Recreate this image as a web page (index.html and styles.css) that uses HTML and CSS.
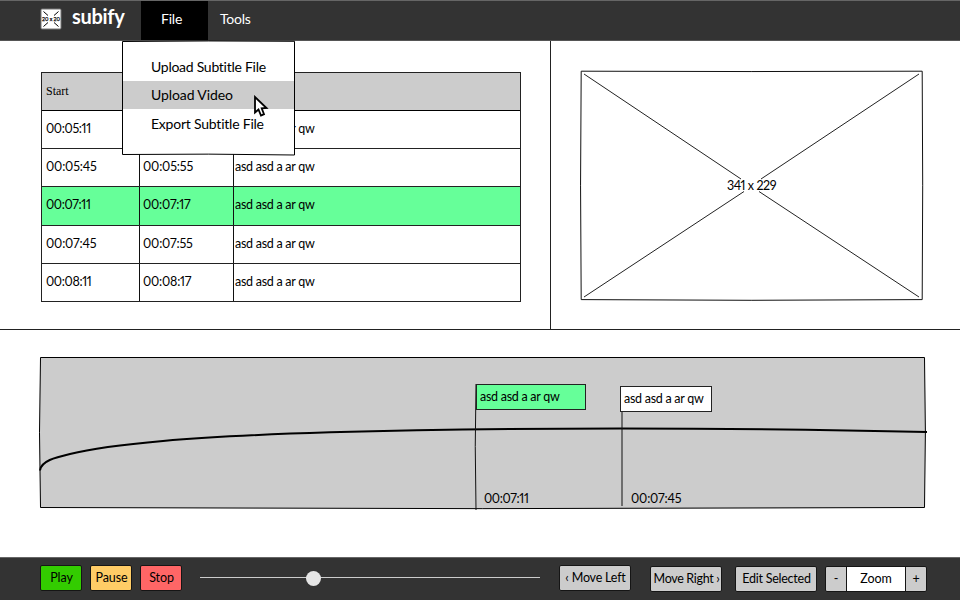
FILE: index.html
```html
<!DOCTYPE html>
<html lang="en">
<head>
<meta charset="utf-8">
<title>subify</title>
<link rel="stylesheet" href="styles.css">
</head>
<body>
<div class="app">
  <header class="topbar">
    <svg class="logo" width="22" height="22" viewBox="0 0 22 22">
      <rect x="1" y="1" width="20" height="20" rx="1" fill="#fff" stroke="#777"/>
      <path d="M3.500 3.500l4.500 4M18.500 3.500l-4.500 4M3.500 18.500l4.500-4M18.500 18.500l-4.500-4" stroke="#000" stroke-width="1"/>
      <text x="2" y="13" font-size="6" textLength="18" lengthAdjust="spacingAndGlyphs" stroke="#000" stroke-width=".25">20 x 20</text>
    </svg>
    <h1 class="brand">subify</h1>
    <nav class="menu">
      <div class="tab tab-open">
        <span class="tab-label">File</span>
        <div class="dropdown">
          <svg class="frame" width="174" height="116" viewBox="0 0 174 116">
            <path d="M.5 1.500Q87 .5 172.500 1.300V115Q87 113.500 .5 114.500Z" fill="#fff" stroke="#000"/>
          </svg>
          <span class="item sub">Upload Subtitle File</span>
          <span class="item item-on vid">Upload Video</span>
          <span class="item exp">Export Subtitle File</span>
          <svg class="cursor" width="18" height="24" viewBox="0 0 18 24">
            <path d="M2 2V17.500L5.500 14.500L8 20.500L11 19.200L8.700 13.300L13.500 13Z" fill="#fff" stroke="#000" stroke-width="1.800"/>
          </svg>
        </div>
      </div>
      <span class="tools">Tools</span>
    </nav>
  </header>

  <main class="workspace">
    <section class="subtitles">
      <div class="table">
        <div class="thead">Start</div>
        <div class="row"><span class="t t11">00:05:11</span><span class="t"></span><span class="txt">asd asd a ar qw</span></div>
        <div class="row"><span class="t">00:05:45</span><span class="t">00:05:55</span><span class="txt">asd asd a ar qw</span></div>
        <div class="row selected"><span class="t t11">00:07:11</span><span class="t t17">00:07:17</span><span class="txt">asd asd a ar qw</span></div>
        <div class="row"><span class="t">00:07:45</span><span class="t">00:07:55</span><span class="txt">asd asd a ar qw</span></div>
        <div class="row"><span class="t t11">00:08:11</span><span class="t t17">00:08:17</span><span class="txt">asd asd a ar qw</span></div>
      </div>
    </section>
    <section class="preview">
      <div class="video">
        <svg class="frame" width="344" height="231" viewBox="0 0 344 231">
          <path d="M1.200 1.200Q172 1.900 342.200 1.200Q343.200 115 342.200 229.600Q172 231 1.200 229.600Q-.1 115 1.200 1.200Z" fill="none" stroke="#111"/>
          <path d="M4 4L161 109M339 4L181 109M4 227L164 121.500M339 227L179 121.500" stroke="#222" fill="none"/>
        </svg>
        <span class="size">341 x 229</span>
      </div>
    </section>
  </main>

  <section class="timeline">
    <div class="track">
      <svg class="frame" width="890" height="154" viewBox="0 0 890 154">
        <path d="M1.500 1.500H885.500Q887.300 76 885.500 151.500Q443 153.800 1.500 151.500Q-.5 76 1.500 1.500Z" fill="#ccc" stroke="#000"/>
        <path d="M1 114.500C2 105 16 101.500 31 98C59 91 96 87.500 124 85C181 80 236 78 291 76.300C391 73.500 491 72.600 581 72.500C701 72.500 791 73.500 888 76" fill="none" stroke="#000" stroke-width="2"/>
        <path d="M437 28Q435.500 90 437 154M583 55V150" fill="none" stroke="#111"/>
      </svg>
      <div class="cue cue-a"><span class="txt">asd asd a ar qw</span></div>
      <div class="cue cue-b"><span class="txt">asd asd a ar qw</span></div>
      <span class="stamp stamp-a t11">00:07:11</span>
      <span class="stamp stamp-b">00:07:45</span>
    </div>
  </section>

  <footer class="controls">
    <button class="btn play">Play</button>
    <button class="btn pause">Pause</button>
    <button class="btn stop">Stop</button>
    <div class="slider"><div class="knob"></div></div>
    <button class="btn left">‹ Move Left</button>
    <button class="btn right low">Move Right ›</button>
    <button class="btn edit low">Edit Selected</button>
    <div class="zoom low"><span>-</span><span class="zoom-label">Zoom</span><span>+</span></div>
  </footer>
</div>
</body>
</html>
```
FILE: styles.css
```css
* { box-sizing: border-box; }
body { margin: 0; background: #fff; color: #000; font-family: Lato, sans-serif; font-size: 12.5px; font-variant-numeric: proportional-nums; }
span { white-space: nowrap; }
.app { width: 960px; height: 600px; display: flex; flex-direction: column; overflow: hidden; }
.frame { position: absolute; left: 0; top: 0; z-index: -1; }

.topbar { height: 41px; background: #333; border-top: 1px solid #666; border-bottom: 1px solid #555; display: flex; padding-left: 40px; color: #fff; position: relative; z-index: 2; }
.logo { margin-top: 7px; flex: none; overflow: visible; }
.brand { margin: 0 0 0 10px; width: 69px; font-size: 20px; line-height: 31px; font-weight: 700; letter-spacing: -.3px; }
.menu { display: flex; font-size: 14px; line-height: 36px; }
.tab { width: 67px; background: #000; position: relative; padding-left: 20px; letter-spacing: -.2px; }
.tools { padding-left: 12px; letter-spacing: -.25px; }
.dropdown { position: absolute; left: -19px; top: 38.500px; width: 174px; height: 116px; padding: 13.500px 2px 0 1px; display: flex; flex-direction: column; color: #000; z-index: 1; }
.item { height: 28px; line-height: 27px; padding-left: 28px; letter-spacing: -.27px; }
.vid { letter-spacing: -.1px; }
.item-on { background: #ccc; height: 28px; }
.exp { line-height: 30px; letter-spacing: -.22px; }
.cursor { position: absolute; left: 131px; top: 55px; }

.workspace { height: 289px; display: grid; grid-template-columns: 551px 1fr; border-bottom: 1px solid #222; }
.subtitles { border-right: 1px solid #222; padding: 31px 0 0 41px; }
.table { width: 480px; border: 1px solid #222; border-bottom: 0; display: flex; flex-direction: column; }
.thead { height: 38px; background: #ccc; border-bottom: 1px solid #000; font-family: "Liberation Serif", serif; font-size: 12px; line-height: 36px; padding-left: 4px; }
.row { height: 38.200px; display: grid; grid-template-columns: 98px 94px 1fr; border-bottom: 1px solid #222; line-height: 36px; }
.row .t { padding-left: 4px; border-right: 1px solid #111; }
.row .t + .t { padding-left: 3px; }
.t { letter-spacing: -.16px; }
.t17 { letter-spacing: -.2px; }
.t11 { letter-spacing: -.35px; }
.txt { letter-spacing: -.27px; }
.row .txt { padding-left: 1px; }
.selected { background: #6f9; }
.preview { padding: 29px 0 0 29px; }
.video { position: relative; z-index: 0; width: 344px; height: 231px; display: flex; align-items: center; justify-content: center; padding: 0 1px 0 0; }
.size { letter-spacing: -.45px; }

.timeline { height: 227px; padding: 26px 0 0 39px; }
.track { position: relative; z-index: 0; width: 890px; height: 154px; }
.cue { position: absolute; height: 26px; line-height: 23px; border: 1px solid #222; padding-left: 3px; }
.cue-a { left: 437px; top: 28px; width: 110px; background: #6f9; }
.cue-b { left: 581px; top: 30px; width: 92px; background: #fff; }
.stamp { position: absolute; top: 134px; line-height: 18px; }
.stamp-a { left: 445px; }
.stamp-b { left: 592px; letter-spacing: -.16px; }

.controls { height: 43px; background: #333; border-top: 1px solid #666; display: flex; padding: 7px 0 0 40px; }
.btn { height: 26px; padding: 0 0 1px 1px; border: 1px solid #151515; border-radius: 2px; background: #ccc; color: #000; font: inherit; font-size: 12.5px; white-space: nowrap; display: flex; justify-content: center; align-items: center; }
.low { margin-top: 1px; }
.play, .pause, .stop { width: 42px; margin-right: 8px; letter-spacing: -.12px; }
.play { background: #3c0; }
.pause { background: #fc6; }
.stop { background: #f66; }
.slider { width: 340px; height: 26px; margin: 0 19px 0 10px; display: flex; align-items: center; background: linear-gradient(#ccc, #ccc) 0 12px / 100% 1px no-repeat; }
.knob { width: 15px; height: 15px; border-radius: 50%; background: #e5e5e5; margin-left: 106px; }
.left { width: 72px; margin-right: 19px; letter-spacing: -.2px; }
.right { width: 72px; margin-right: 13px; letter-spacing: -.32px; }
.edit { width: 82px; margin-right: 8px; letter-spacing: -.25px; }
.zoom { display: grid; grid-template-columns: 20px 60px 20px; width: 102px; height: 26px; border: 1px solid #151515; border-radius: 2px; background: #ccc; line-height: 24px; text-align: center; }
.zoom-label { background: #fff; border: solid #151515; border-width: 0 1px; }
```
